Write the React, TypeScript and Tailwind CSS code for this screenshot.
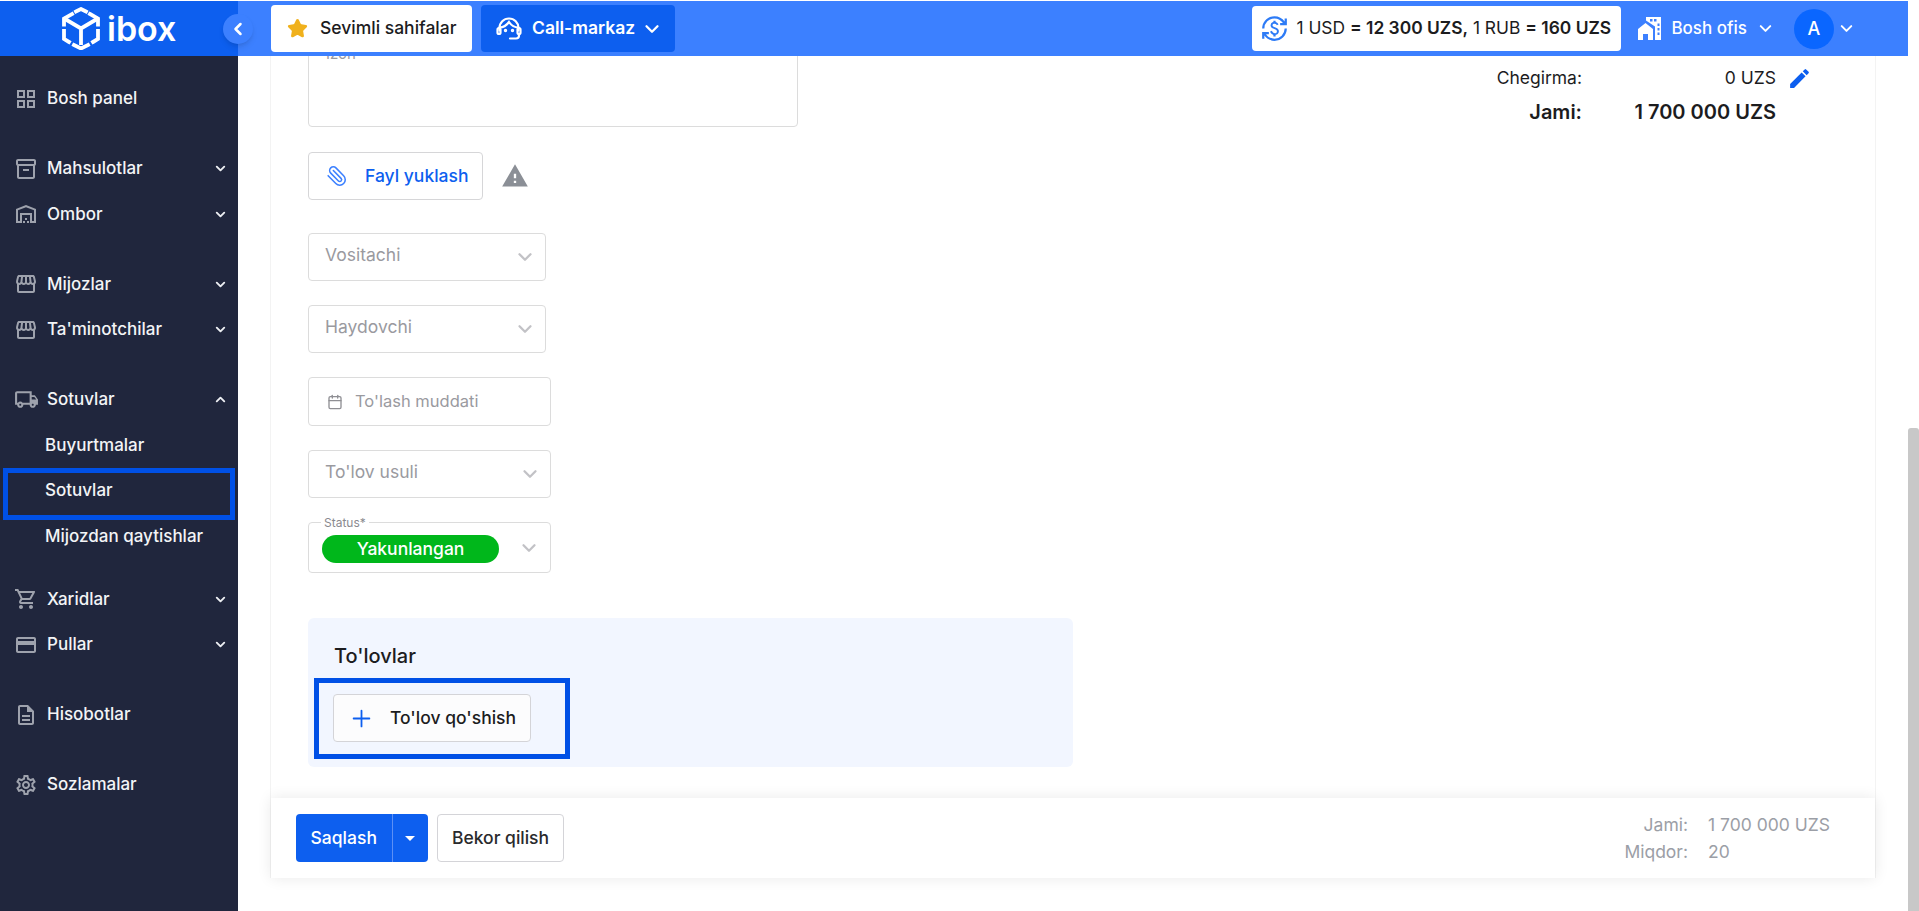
import type { ReactNode } from "react";
import { Calendar, ChevronDown, ChevronLeft, ChevronUp, Paperclip, Plus, Star } from "lucide-react";
import {
  MdArrowDropDown,
  MdEdit,
  MdOutlineCreditCard,
  MdOutlineCurrencyExchange,
  MdOutlineDescription,
  MdOutlineGridView,
  MdOutlineInventory2,
  MdOutlineLocalShipping,
  MdOutlineSettings,
  MdOutlineShoppingCart,
  MdOutlineStorefront,
  MdOutlineWarehouse,
  MdWarning,
} from "react-icons/md";

function Logo() {
  return (
    <svg width="38" height="43" viewBox="0 0 38 43" fill="none" stroke="white" strokeWidth="3.8" strokeLinecap="square">
      <path d="M14 4.5 19 2l5 2.5M28 7l8 4.5v6M36 24v8l-5 3M26 38l-7 3.5-7-3.5M7 35l-5-3v-8M2 17.5v-6L10 7" />
      <path d="M3 12l16 9.5L35 12M19 21.5V36" />
    </svg>
  );
}

function AgentIcon() {
  return (
    <svg width="28" height="28" viewBox="0 0 28 28" fill="none" stroke="white" strokeWidth="2.2" strokeLinecap="round">
      <path d="M4.5 15.5V13a9.5 9.5 0 0 1 19 0v2.5" />
      <path d="M4.5 12.5c4 0 7-2 9.5-5.5 2 3 5 5.5 9.5 5.5" />
      <rect x="2.5" y="13" width="3" height="6" rx="1.5" />
      <rect x="22.5" y="13" width="3" height="6" rx="1.5" />
      <path d="M24 19v1.500a3 3 0 0 1-3 3h-6" />
      <circle cx="10.5" cy="15.5" r="0.6" fill="white" />
      <circle cx="17.5" cy="15.5" r="0.6" fill="white" />
    </svg>
  );
}

function OfficeIcon() {
  return (
    <svg width="23" height="23" viewBox="0 0 23 23" fill="white">
      <path d="M8 0h15v23h-6V9.5L8 3.5z" />
      <path d="M0 12 7.5 6l7.5 6v11h-5v-6H5v6H0z" />
      <g fill="#3c80ff">
        <rect x="12" y="2" width="2.5" height="2.5" />
        <rect x="16" y="2" width="2.5" height="2.5" />
        <rect x="19.5" y="6.5" width="2" height="2.5" />
        <rect x="19.5" y="11" width="2" height="2.5" />
        <rect x="19.5" y="15.5" width="2" height="2.5" />
      </g>
    </svg>
  );
}

type NavItem = { icon: ReactNode; label: string; arrow?: "down" | "up" };

function NavRow({ icon, label, arrow }: NavItem) {
  return (
    <div className="flex h-[45.5px] items-center pl-[14px] pr-[10px] text-[17px] font-medium text-[#f3f4f6]">
      <span className="flex w-[33px] shrink-0 text-[#9ea2ad]">{icon}</span>
      <span className="flex-1">{label}</span>
      {arrow === "down" && <ChevronDown size={15} strokeWidth={3} className="text-[#eceef2]" />}
      {arrow === "up" && <ChevronUp size={15} strokeWidth={3} className="text-[#eceef2]" />}
    </div>
  );
}

function Sidebar() {
  return (
    <aside className="flex w-[238px] shrink-0 flex-col gap-[24.5px] bg-[#20263d] pt-[20px]">
      <NavRow icon={<MdOutlineGridView size={24} />} label="Bosh panel" />
      <div>
        <NavRow icon={<MdOutlineInventory2 size={24} />} label="Mahsulotlar" arrow="down" />
        <NavRow icon={<MdOutlineWarehouse size={24} />} label="Ombor" arrow="down" />
      </div>
      <div>
        <NavRow icon={<MdOutlineStorefront size={24} />} label="Mijozlar" arrow="down" />
        <NavRow icon={<MdOutlineStorefront size={24} />} label="Ta'minotchilar" arrow="down" />
      </div>
      <div className="mb-[-7px]">
        <NavRow icon={<MdOutlineLocalShipping size={25} />} label="Sotuvlar" arrow="up" />
        <div className="flex h-[45.5px] items-center pl-[45px] text-[17px] font-medium text-[#f3f4f6]">Buyurtmalar</div>
        <div className="relative flex h-[45.5px] items-center pl-[45px] text-[17px] font-medium text-[#f3f4f6]">
          Sotuvlar
          <div className="absolute left-[3px] top-[-0.5px] h-[52px] w-[232px] border-[5px] border-[#0050e6]" />
        </div>
        <div className="flex h-[45.5px] items-center pl-[45px] text-[17px] font-medium text-[#f3f4f6]">Mijozdan qaytishlar</div>
      </div>
      <div>
        <NavRow icon={<MdOutlineShoppingCart size={24} />} label="Xaridlar" arrow="down" />
        <NavRow icon={<MdOutlineCreditCard size={24} />} label="Pullar" arrow="down" />
      </div>
      <NavRow icon={<MdOutlineDescription size={24} />} label="Hisobotlar" />
      <NavRow icon={<MdOutlineSettings size={24} />} label="Sozlamalar" />
    </aside>
  );
}

function Header() {
  return (
    <header className="flex h-[55px] shrink-0 items-center bg-[#3c80ff]">
      <div className="relative flex h-full w-[238px] shrink-0 items-center bg-[#0d5fef] pl-[62px]">
        <Logo />
        <span className="ml-[7px] text-[34px] font-semibold leading-none text-white">ibox</span>
        <div className="absolute right-[-15px] top-[13px] flex h-[30px] w-[30px] items-center justify-center rounded-full bg-[#3c80ff] shadow-md">
          <ChevronLeft size={20} strokeWidth={3} className="text-white" />
        </div>
      </div>
      <div className="ml-[33px] flex h-[47px] w-[201px] items-center rounded-[4px] bg-white pl-[16px] text-[17.5px] font-medium text-[#1c1c1e]">
        <Star size={21} fill="#f0b11d" stroke="#f0b11d" />
        <span className="ml-[12px]">Sevimli sahifalar</span>
      </div>
      <div className="ml-[9px] flex h-[47px] w-[194px] items-center rounded-[4px] bg-[#0d5fef] pl-[14px] text-[17.5px] font-semibold text-white">
        <AgentIcon />
        <span className="ml-[9px]">Call-markaz</span>
        <ChevronDown size={22} strokeWidth={2.5} className="ml-[6px]" />
      </div>
      <div className="ml-auto flex h-[45px] w-[369px] items-center rounded-[4px] bg-white pl-[9px] text-[17.4px] text-[#1c1c1e]">
        <MdOutlineCurrencyExchange size={27} className="text-[#2d7bf6]" />
        <span className="ml-[8px] whitespace-pre">
          1 USD <b className="font-semibold">= 12 300 UZS,</b> 1 RUB <b className="font-semibold">= 160 UZS</b>
        </span>
      </div>
      <div className="ml-[17px] flex items-center text-[17px] font-medium text-white">
        <OfficeIcon />
        <span className="ml-[10px]">Bosh ofis</span>
        <ChevronDown size={19} strokeWidth={2.5} className="ml-[9px]" />
      </div>
      <div className="ml-[19px] flex h-[40px] w-[40px] items-center justify-center rounded-full bg-[#0a66ff] text-[18px] font-medium text-white">
        A
      </div>
      <ChevronDown size={19} strokeWidth={2.5} className="ml-[3px] mr-[52px] text-white" />
    </header>
  );
}

function SelectBox({ label, wide }: { label: string; wide?: boolean }) {
  return (
    <div
      className={`flex h-[48px] items-center justify-between rounded-[4px] border border-[#dcdcdc] pl-[16px] pr-[9px] text-[17.5px] text-[#9a9a9f] ${
        wide ? "w-[243px]" : "w-[238px]"
      }`}
    >
      <span className="mb-[4px]">{label}</span>
      <ChevronDown size={22} strokeWidth={2.5} className="text-[#c2c2c6]" />
    </div>
  );
}

function FormColumn() {
  return (
    <div className="w-[765px]">
      <div className="-mt-[30px] h-[101px] w-[490px] rounded-[4px] border border-[#dcdcdc] pl-[17px] pt-[16px] text-[15px] leading-[22px] text-[#9a9a9f]">
        Izoh
      </div>
      <div className="mt-[25px] flex items-center">
        <div className="flex h-[48px] w-[175px] items-center rounded-[4px] border border-[#d6d6d8] pl-[17px] text-[17.5px] font-medium text-[#0d5fef]">
          <Paperclip size={22} strokeWidth={1.7} className="-scale-x-100 text-[#3c80ff]" />
          <span className="ml-[17px]">Fayl yuklash</span>
        </div>
        <MdWarning size={28} className="ml-[18px] text-[#8b8f96]" />
      </div>
      <div className="mt-[33px] flex flex-col gap-[24px]">
        <SelectBox label="Vositachi" />
        <SelectBox label="Haydovchi" />
        <div className="flex h-[49px] w-[243px] items-center rounded-[4px] border border-[#dcdcdc] pl-[18px] text-[16.5px] text-[#9a9a9f]">
          <Calendar size={16} className="text-[#8f8f94]" />
          <span className="ml-[12px]">To'lash muddati</span>
        </div>
        <SelectBox label="To'lov usuli" wide />
        <div className="relative flex h-[51px] w-[243px] items-center justify-between rounded-[4px] border border-[#dcdcdc] pl-[13px] pr-[10px]">
          <span className="absolute left-[12px] top-[-7px] bg-white px-[3px] text-[12px] leading-[14px] text-[#8a8a8f]">Status*</span>
          <span className="mt-[3px] flex h-[28px] w-[177px] items-center justify-center rounded-full bg-[#00b71b] text-[17.5px] font-medium text-white">
            Yakunlangan
          </span>
          <ChevronDown size={22} strokeWidth={2.5} className="text-[#c2c2c6]" />
        </div>
      </div>
      <section className="mt-[45px] h-[149px] rounded-[6px] bg-[#f2f6ff] pl-[25px] pt-[24px]">
        <h3 className="ml-px text-[20px] font-medium leading-[28px] text-[#1c1c1e]">To'lovlar</h3>
        <div className="relative mt-[24px] w-[198px]">
          <div className="flex h-[48px] items-center rounded-[4px] border border-[#d4d4d8] bg-[#fcfcfd] pl-[14px] text-[17.5px] font-medium text-[#1c1c1e]">
            <Plus size={27} strokeWidth={1.6} className="text-[#0d5fef]" />
            <span className="ml-[15px]">To'lov qo'shish</span>
          </div>
          <div className="absolute left-[-19px] top-[-16px] h-[81px] w-[256px] border-[5px] border-[#0050e6]" />
        </div>
      </section>
    </div>
  );
}

function Totals() {
  return (
    <div className="mr-[64px] mt-[10px] flex flex-col gap-[10px] text-[#1c1c1e]">
      <div className="flex h-[24px] items-center text-[17.5px]">
        <span className="w-[100px] text-right">Chegirma:</span>
        <span className="w-[194px] text-right">0 UZS</span>
        <MdEdit size={25} className="ml-[11px] mr-[-1px] text-[#0d5fef]" />
      </div>
      <div className="flex h-[24px] items-center text-[20px] font-semibold">
        <span className="w-[100px] text-right">Jami:</span>
        <span className="w-[194px] whitespace-nowrap text-right">1 700 000 UZS</span>
        <span className="ml-[11px] w-[24px]" />
      </div>
    </div>
  );
}

function BottomBar() {
  return (
    <div className="mt-[31px] flex h-[80px] items-center justify-between bg-white pl-[25px] pr-[36px] shadow-[0_0_14px_rgba(0,0,0,0.09)]">
      <div className="flex items-center gap-[9px]">
        <div className="flex h-[48px] w-[132px] items-center rounded-[4px] bg-[#0d5fef] text-[17.5px] font-medium text-white">
          <span className="flex w-[96.5px] justify-center border-r border-[#5c90f5] leading-[48px]">Saqlash</span>
          <MdArrowDropDown size={24} className="ml-[5px]" />
        </div>
        <div className="flex h-[48px] w-[127px] items-center justify-center rounded-[4px] border border-[#d4d4d8] text-[17.5px] font-medium text-[#2a2a2c]">
          Bekor qilish
        </div>
      </div>
      <div className="grid grid-cols-[auto_131px] gap-x-[20px] gap-y-[3px] text-[17.5px] leading-[24px] text-[#9b9ea6]">
        <span className="text-right">Jami:</span>
        <span>1 700 000 UZS</span>
        <span className="text-right">Miqdor:</span>
        <span>20</span>
      </div>
    </div>
  );
}

export default function App() {
  return (
    <div className="flex h-screen overflow-hidden bg-white font-['Inter',sans-serif]">
      <div className="flex min-w-0 flex-1 flex-col pt-px">
        <Header />
        <div className="flex min-h-0 flex-1">
          <Sidebar />
          <main className="min-w-0 flex-1 overflow-hidden pl-[32px]">
            <div className="w-[1606px] border-x border-[#f3f3f3] bg-white">
              <div className="flex justify-between pl-[37px]">
                <FormColumn />
                <Totals />
              </div>
              <BottomBar />
            </div>
          </main>
        </div>
      </div>
      <div className="flex w-[11px] shrink-0 flex-col bg-white pt-[428px]">
        <div className="flex-1 rounded-t-[3px] bg-[#c8c8c8]" />
      </div>
    </div>
  );
}
